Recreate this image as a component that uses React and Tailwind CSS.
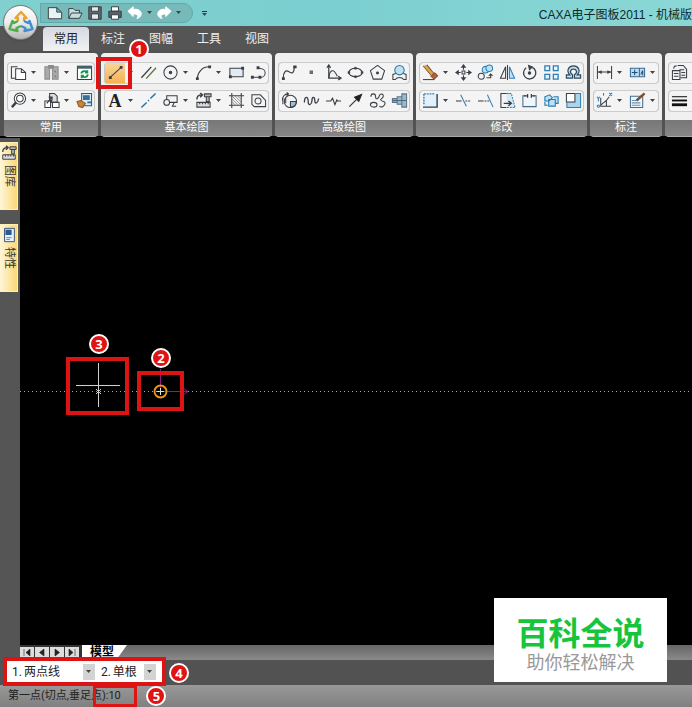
import React, { useState } from "react";

const ink = "#3a3f45";
const blue = "#2f7fb5";
const pale = "#bfe0f2";

const icons = {
  copy: (
    <>
      <path d="M8 3H1.500v12H6" />
      <path d="M6 5h6l4.500 4v7.500H6zM12 5v4h4.500" fill="#fff" />
    </>
  ),
  paste: (
    <g stroke="#8c8c8c">
      <path d="M2 3h5v13H2zM10 3h6v13h-6z" fill="#aaa" />
      <path d="M6 1.500h5v3H6z" fill="#888" />
      <path d="M8.500 6v11" stroke="#eee" />
      <path d="M12 7l2 2M12 12l2 2" stroke="#777" />
    </g>
  ),
  refresh: (
    <>
      <path d="M1.500 2.500h15v14h-15z" fill="#fff" />
      <path d="M1.500 3.500h15" strokeWidth="3" stroke="#44606b" />
      <path d="M5.500 10a3.500 3 0 0 1 6-1.500M12.500 11a3.500 3 0 0 1-6 2M12 6.500v2.500H9.500M6 15v-2.500h2.500" stroke="#159a51" strokeWidth="2" />
    </>
  ),
  zoom: (
    <>
      <circle cx="10.500" cy="7" r="6" fill="#fff" />
      <circle cx="10.500" cy="7" r="3.500" />
      <path d="M6.500 11 2 16" strokeWidth="2.500" />
    </>
  ),
  block: (
    <>
      <path d="M7 1.500h5l3 3V11H9V9H7z" fill="#ddd" />
      <path d="M2 9.500h6v7H2zM10 11h7v5.500h-7z" fill="#fff" />
      <path d="M4 12l5-6M6 5.500h3.500V9" strokeWidth="1.400" />
    </>
  ),
  brush: (
    <>
      <path d="M6 1.500h10.500v13H6z" fill="#d8ecf8" stroke="#35566e" />
      <path d="M8 4h6v4H8z" fill="#396f9c" stroke="#396f9c" />
      <path d="M12 11h4" stroke="#396f9c" strokeWidth="2" />
      <path d="M1 10l4-1 5 3-3 4.500-4-1z" fill="#c78336" stroke="#925a20" />
    </>
  ),
  line: (
    <>
      <path d="M3 14.500 15 3.500" />
      <path d="M2 13h3v3H2zM13.500 2h3v3h-3z" fill={ink} stroke="none" />
    </>
  ),
  parallel: (
    <>
      <path d="M1.500 14.500 12 3" strokeWidth="1.400" />
      <path d="M6.500 15.500 17 4" stroke="#597341" strokeWidth="1.400" />
    </>
  ),
  circle: (
    <>
      <circle cx="9" cy="9" r="7" />
      <circle cx="9" cy="9" r="1.300" fill={ink} />
    </>
  ),
  arc: (
    <>
      <path d="M2.500 15C3 8 8 3 15 3" />
      <path d="M1 14h3v3H1zM14 1.500h3v3h-3z" fill={ink} stroke="none" />
    </>
  ),
  rect: (
    <>
      <path d="M2 4.500h14v9H2z" fill="#e3ebf2" />
      <path d="M1 12h3v3H1zM14 3h3v3h-3z" fill={ink} stroke="none" />
    </>
  ),
  poly: (
    <>
      <path d="M2 14h9a4.500 4.500 0 0 0 1-9L8 4" />
      <path d="M1 12.500h3v3H1zM9 12.500h3v3H9zM7 2.500h3v3H7z" fill={ink} stroke="none" />
    </>
  ),
  center: <path d="M1.500 16.500 7 11M8.500 9.500l1-1M11 7l5.500-5.500" stroke="#28719f" strokeWidth="1.500" />,
  outline: (
    <>
      <path d="M5 4h11v7H5z" />
      <circle cx="5" cy="11" r="3" fill="#eef4f8" />
      <path d="M13 11l-2 4h4" />
    </>
  ),
  library: (
    <>
      <path d="M2 11h14v5H2zM5 11v2M8 11v2M11 11v2M14 11v2" fill="#ddd" />
      <path d="M2 8c0-4 2-5 5-5M5.500 1 8 3 5.500 5.500" strokeWidth="1.500" />
      <path d="M10 2h7v3h-7zM12 5h3v5h-3z" fill="#bbb" />
    </>
  ),
  hatch: (
    <>
      <path d="M4 1v16M14 1v16M1 4h16M1 14h16" />
      <path d="M4 7l7 7M4 4l10 10M7 4l7 7M10 4l4 4M4 10l4 4" stroke="#777" strokeWidth=".8" />
    </>
  ),
  region: (
    <>
      <path d="M2 3h9l5.500 6v6.500H4.500L2 13z" />
      <circle cx="8.500" cy="9.500" r="3.200" />
    </>
  ),
  spline: (
    <>
      <path d="M2.500 15C2 9 5 6 8 8s6 3 6-5" strokeWidth="1.300" />
      <path d="M1 14h3v3H1zM13 1.500h3.500v3H13z" fill={ink} stroke="none" />
    </>
  ),
  point: <path d="M7.500 7.500h2.500v2.500H7.500z" fill="#777" stroke="#666" />,
  formula: (
    <>
      <path d="M4 2v13h12M2 4l2-3 2 3M14 13l3 2-3 2" strokeWidth="1.300" />
      <path d="M4 15C5 6 9 4 13 13" />
    </>
  ),
  ellipse: (
    <>
      <ellipse cx="9" cy="9" rx="7" ry="4.500" />
      <path d="M8 3.500h2v2H8zM1 8h2v2H1zM15 8h2v2h-2zM8 12.500h2v2H8z" fill={ink} strokeWidth=".5" />
    </>
  ),
  polygon: (
    <>
      <path d="M9 1.500 16.500 7 13.500 16h-9L1.500 7z" />
      <circle cx="9" cy="9.500" r="1" fill={ink} />
    </>
  ),
  local: (
    <>
      <circle cx="9" cy="6.500" r="5" fill={pale} stroke="#35758f" />
      <path d="M5 10 2 11v5.500h2.500c2-3 7-3 9 0H16V11l-3-1" />
    </>
  ),
  gear: (
    <>
      <circle cx="10" cy="10" r="6.500" />
      <path d="M10 10h6c0 4-2 6-6 6z" fill="#9dbfd9" />
      <path d="M1.500 9c0-4 2-7 6-7M6 .500 8 2 6 4M2 5v8M5 6v6" />
    </>
  ),
  wave: <path d="M1.500 11c0-7 4-7 4-1s4 3 4-1 3-5 3 0 4 2 4-2" strokeWidth="1.400" />,
  breakline: <path d="M1 9.500h5l2-3 2.500 7 2-5 1 1H17" strokeWidth="1.200" />,
  arrow: (
    <>
      <path d="M2.500 15.500 11 7" strokeWidth="1.400" />
      <path d="M15.500 2.500 12.500 10 8 5.500z" fill="#222" stroke="#222" />
    </>
  ),
  contour: (
    <>
      <path d="M2 5c0-4 5-4 5 0s3 2 4-1 5-2 4 1-4 2-2 4 4 0 4 3-4 5-6 3" />
      <ellipse cx="5" cy="13.500" rx="3.500" ry="2.500" />
    </>
  ),
  shaft: (
    <>
      <path d="M1.500 7h5v4h-5zM6.500 5h5v8h-5zM11.500 2h5v14h-5z" fill="#9db9cc" stroke="#5b7487" />
      <path d="M1 9h15" stroke="#496980" />
    </>
  ),
  erase: (
    <>
      <path d="M1.500 2 10 12M5 1l8 10" stroke="#6f4a21" strokeWidth="1.500" />
      <path d="M3 1.500 12 12" stroke="#dca14d" strokeWidth="3" />
      <path d="M9.500 13l4-3.500 3 3-3.500 3.500z" fill="#b9653c" stroke="#8c4a29" />
      <path d="M1 16.500h12" />
    </>
  ),
  move: (
    <>
      <path d="M9 1v5M9 12v5M1 9h5M12 9h5" />
      <path d="M9 0l3 4H6zM9 18l-3-4h6zM0 9l4-3v6zM18 9l-4 3V6z" fill={ink} stroke="none" />
      <path d="M7.500 7.500h3v3h-3z" />
    </>
  ),
  duplicate: (
    <>
      <circle cx="9" cy="6" r="3.500" fill={pale} stroke={blue} />
      <circle cx="13" cy="4.500" r="3.500" fill={pale} stroke={blue} />
      <circle cx="4.500" cy="13" r="3.200" />
      <path d="M10 14.500h4.500V11M12.500 12.500l2-2 2 2" />
    </>
  ),
  mirror: (
    <>
      <path d="M7 3v12H1.500z" />
      <path d="M11 3v12h5.500z" fill={pale} stroke={blue} />
      <path d="M9 1v16" />
    </>
  ),
  rotate: (
    <>
      <path d="M5.500 4A6.500 6.500 0 1 0 12 3.500" strokeWidth="1.400" />
      <path d="M8 1.500l4 1.500-3 3z" fill={ink} />
      <circle cx="9" cy="9.500" r="1.300" fill={ink} />
    </>
  ),
  array: (
    <g stroke={blue} strokeWidth="1.400" fill="#eaf5fb">
      <path d="M2 2h5v5H2zM11 2h5v5h-5zM2 11h5v5H2zM11 11h5v5h-5z" />
    </g>
  ),
  offset: (
    <>
      <path d="M1.500 15v-3.500H5C1 7 4 2 9 2s8 5 4 9.500h3.500V15H10v-3.500c4-3 2-6-1-6s-5 3-1 6V15z" fill={pale} stroke="#31495d" strokeWidth="1.300" />
    </>
  ),
  scaleRect: (
    <>
      <path d="M2.500 2.500h13v13h-13z" fill="#e2f0f9" stroke="none" />
      <path d="M2 2h12M2 2v12" strokeDasharray="2 1" strokeWidth="1.500" stroke={blue} />
      <path d="M1 16h15V2" stroke="#2d4052" strokeWidth="1.500" />
    </>
  ),
  trim: (
    <>
      <path d="M1 9.500h6" />
      <path d="M11 9.500h6" strokeDasharray="2 1" />
      <path d="M6 3l6 12" stroke={blue} />
    </>
  ),
  extend: (
    <>
      <path d="M1 9.500h6" />
      <path d="M8 9.500h5" strokeDasharray="2 1" />
      <path d="M11 3l6 13" stroke={blue} />
    </>
  ),
  stretch: (
    <>
      <path d="M12 1.500H2v15h6" />
      <path d="M8 1.500h5l4 15H8" fill="#d5eaf7" stroke={blue} strokeDasharray="2 1" />
      <path d="M5 12h7M10 9.500l3 2.500-3 2.500" strokeWidth="1.500" />
    </>
  ),
  split: (
    <>
      <path d="M5 4H2v11.500h14V4h-3" fill="#eef6fb" stroke="#4b6b85" />
      <path d="M3 4h4M11 4h4M7 2v4M11 2v4" strokeWidth="1.300" />
    </>
  ),
  explode: (
    <g stroke={blue} fill={pale} strokeWidth="1.200">
      <path d="M2 5l5-2 3 3-4 4-4-1zM6 8h7v7H6zM11 5h5v7h-3M2 10v4h3" />
    </g>
  ),
  resize: (
    <>
      <path d="M11 1.500h5.500v15H2V11" fill="#a9d4ec" stroke={blue} />
      <path d="M1.500 1.500h9v9h-9z" fill="#fff" />
    </>
  ),
  dimension: (
    <>
      <path d="M1.500 2v14M16.500 2v14M2 8.500h14" />
      <path d="M2 8.500l4-2v4zM16 8.500l-4-2v4z" fill={ink} stroke="none" />
    </>
  ),
  tolerance: (
    <>
      <path d="M1.500 4.500h15v9h-15zM11 4.500v9" fill="#bcdaf0" stroke="#386b96" />
      <path d="M3 9h6M6 6v6M12.500 11l2-4v5" stroke="#234e75" />
    </>
  ),
  coordinate: (
    <>
      <path d="M5 6v9h11M5 14 11 9l3-4M11 9v6" />
      <path d="M1 5l1.500 2L4 5M2.500 7v3M14 1l3 3M17 1l-3 3M8 1v3" stroke={blue} />
      <circle cx="2.500" cy="15" r="1.200" stroke={blue} />
    </>
  ),
  edit: (
    <>
      <path d="M1.500 4.500h13v12h-13z" fill="#eef6fb" stroke="#446f91" />
      <path d="M3 9h7M3 11.500h9M3 14h9" stroke="#6d91ac" />
      <path d="M16.500 1.500 8 9" stroke="#79512d" strokeWidth="2.500" />
    </>
  ),
  sheet: (
    <>
      <path d="M7 1.500h6l3.500 4v9H10" fill="#eee" />
      <path d="M1.500 7h8v9.500h-8zM3 10h5M3 13h5M3 5c0-3 1-3 3-3M9 6h5M11 9h4M11 12h4" />
    </>
  ),
  width: (
    <g stroke="#111">
      <path d="M1 5h16" />
      <path d="M1 9h16" strokeWidth="2" />
      <path d="M1 13.500h16" strokeWidth="3" />
    </g>
  ),
  file: <path d="M1.500 3H11l5.500 5v7.500h-15zM11 3v5h5" fill="#e5f5f5" />,
  open: <path d="M2 15V4h5l2 2h5v3M2 15 5 9h12l-3 6z" fill="#c3dfdf" />,
  save: (
    <>
      <path d="M2 2h14v14H2z" fill="#5c6870" />
      <path d="M5 2h8v5H5zM5 10h8v6H5z" fill="#e4ecee" />
    </>
  ),
  print: (
    <>
      <path d="M5 2h8v5H5z" fill="#fff" />
      <path d="M2 7h14v7H2z" fill="#596269" />
      <path d="M5 11h8v5H5z" fill="#fff" />
    </>
  ),
  undo: <path d="M1 7 7 2v3c6-1 9 2 9 5s-3 5-5 5c2-2 2-5-4-5v3z" fill="#fff" stroke="#fff" />,
  redo: <path d="M17 7 11 2v3C5 4 2 7 2 10s3 5 5 5c-2-2-2-5 4-5v3z" fill="#fff" stroke="#fff" />,
  panel: (
    <>
      <path d="M4 1.500h11v15H4z" fill="#eaf2fa" stroke="#395475" />
      <path d="M5 3h7v6H5z" fill="#2a5b99" stroke="none" />
      <path d="M6 12h6M6 14h4" stroke="#6688a8" />
    </>
  ),
};

function Icon({ name, className }) {
  return (
    <svg viewBox="0 0 18 18" className={className} fill="none" stroke={ink} strokeWidth="1.100" aria-hidden="true">
      {icons[name]}
    </svg>
  );
}

function Caret() {
  return (
    <svg viewBox="0 0 5 3" className="h-[3px] w-[5px]" aria-hidden="true">
      <path d="M0 0h5L2.500 3z" fill="#444" />
    </svg>
  );
}

// A trailing "+" marks a tool that has a drop-down menu.
const groups = [
  { title: "常用", rows: [["copy+", "paste+", "refresh"], ["zoom+", "block+", "brush"]] },
  {
    title: "基本绘图",
    rows: [
      ["line+", "parallel", "circle+", "arc+", "rect", "poly"],
      ["text+", "center", "outline+", "library+", "hatch", "region"],
    ],
  },
  {
    title: "高级绘图",
    rows: [
      ["spline", "point", "formula", "ellipse", "polygon", "local"],
      ["gear", "wave", "breakline", "arrow", "contour", "shaft"],
    ],
  },
  {
    title: "修改",
    rows: [
      ["erase+", "move", "duplicate", "mirror", "rotate", "array", "offset"],
      ["scaleRect+", "trim", "extend", "stretch", "split", "explode", "resize"],
    ],
  },
  { title: "标注", rows: [["dimension+", "tolerance+"], ["coordinate+", "edit+"]] },
  { title: "", rows: [["sheet+"], ["width+"]] },
];

function Tool({ id }) {
  const name = id.replace("+", "");
  const active = name === "line";
  return (
    <div className="flex shrink-0 items-center">
      <button
        aria-label={name}
        className={
          active
            ? "relative flex h-5 w-5 items-center justify-center bg-gradient-to-b from-[#f9d49a] to-[#f6b24e]"
            : "flex h-5 w-5 items-center justify-center"
        }
      >
        {name === "text" ? (
          <span className="font-['Liberation_Serif',serif] text-[18px] leading-5 font-bold text-[#222]">A</span>
        ) : (
          <Icon name={name} className="size-[17px]" />
        )}
        {active && (
          <span className="pointer-events-none absolute -top-[6px] -left-[9px] z-10 h-[32px] w-[36px] border-4 border-[#dc1414]">
            <span className="absolute -top-[22px] left-[29px]">
              <Badge>1</Badge>
            </span>
          </span>
        )}
      </button>
      {id.endsWith("+") && (
        <button aria-label={name + " menu"} className="flex h-5 w-[11px] items-center justify-center">
          <Caret />
        </button>
      )}
    </div>
  );
}

function Badge({ children }) {
  return (
    <span className="flex size-5 items-center justify-center rounded-full border-2 border-white bg-[#e01212] font-['Noto_Sans',sans-serif] text-[13px] leading-4 font-bold text-white">
      {children}
    </span>
  );
}

function TitleBar() {
  return (
    <header className="relative flex h-[26px] items-center bg-gradient-to-r from-[#7fd0cf] via-[#7ccfd0] to-[#8ad8d6]">
      <button
        aria-label="menu"
        className="absolute top-[5px] left-[3px] z-10 flex size-[35px] items-center justify-center rounded-full border border-[#777] bg-gradient-to-b from-white via-[#ececec] to-[#b5b5b5] shadow"
      >
        <svg viewBox="0 0 28 28" className="size-7" fill="none" strokeWidth="2.400" strokeLinejoin="round" aria-hidden="true">
          <path d="M11 12V9H8.500L14 3l5.500 6H17v3" stroke="#f0a32c" />
          <path d="M17 12l4 2 1.500-2 3 8-8 2 1-3-4.500-2" stroke="#3e8fd0" />
          <path d="M11 12l-4 2-1.500-2-3 8 8 2-1-3 4.500-2" stroke="#4fae48" />
        </svg>
      </button>
      <div className="mb-px ml-10 flex h-5 w-[153px] items-center gap-1 rounded-r-full border border-[#62a9aa] bg-[#78b9ba] pl-[6px]">
        {["file", "open", "save", "print"].map((n) => (
          <button key={n} aria-label={n}>
            <Icon name={n} className="size-4" />
          </button>
        ))}
        <button aria-label="undo"><Icon name="undo" className="size-4" /></button>
        <Caret />
        <button aria-label="redo"><Icon name="redo" className="size-4" /></button>
        <Caret />
      </div>
      <button aria-label="customize" className="ml-[9px] flex flex-col items-center gap-px">
        <span className="h-px w-[5px] bg-[#333]" />
        <Caret />
      </button>
      <h1 className="ml-auto pt-1 font-['Liberation_Sans','Noto_Sans_CJK_SC',sans-serif] text-[12px] leading-5 whitespace-nowrap text-[#10282a]">
        CAXA电子图板2011 - 机械版
      </h1>
    </header>
  );
}

function Ribbon() {
  return (
    <section className="flex h-[87px] gap-[3px] border-b-2 border-black bg-[#525252] pt-[2px] pl-1">
      {groups.map((g, i) => (
        <div key={i} className="flex h-[84px] shrink-0 flex-col rounded-sm border-b border-[#aaa] bg-[#f0f0f0]">
          <div className="flex flex-1 flex-col justify-center gap-2 px-[3px]">
            {g.rows.map((r, j) => (
              <div key={j} className="flex gap-[2px] rounded-sm border-x border-[#c6c6c6] bg-[#f4f4f4] shadow-[0_1px_0_#ccc,0_-1px_0_#ccc]">
                {r.map((t) => (
                  <Tool key={t} id={t} />
                ))}
              </div>
            ))}
          </div>
          <div className="h-4 bg-gradient-to-b from-[#777] to-[#868686] text-center text-[11px] leading-4 text-white">
            {g.title}
          </div>
        </div>
      ))}
    </section>
  );
}

function SideTab({ icon, children }) {
  return (
    <button className="flex h-[68px] w-[18px] flex-col items-center gap-1 border-y border-r border-[#fff0b8] bg-gradient-to-r from-[#fff6d8] to-[#fbd872] pt-[2px]">
      <Icon name={icon} className="size-4" />
      <span className="text-[11px] leading-4 text-[#333] [text-orientation:sideways] [writing-mode:vertical-rl]">{children}</span>
    </button>
  );
}

function Drawing() {
  return (
    <main className="relative min-w-0 flex-1 overflow-hidden bg-black">
      <div className="absolute top-[253px] h-px w-full bg-[repeating-linear-gradient(90deg,#aaa_0_1px,transparent_1px_4px)]" />
      <svg className="absolute top-[219px] left-[46px] h-[60px] w-[130px]" viewBox="0 0 130 60" fill="none" aria-hidden="true">
        <path d="M32.500 6v44M10 28.500h44" stroke="#d0d0d0" />
        <path d="M30 32l5 5M35 32l-5 5" stroke="#ccc" />
        <path d="M94.500 34V12M94.500 34.500H122M117 31l5 3.500-5 3.500" stroke="#92148f" />
        <circle cx="94.500" cy="34.500" r="6" stroke="#e79b1d" strokeWidth="1.800" />
        <path d="M91 34.500h7M94.500 31v7" stroke="#ddd" />
      </svg>
      <div className="absolute top-[219px] left-[46px] h-[58px] w-[63px] border-4 border-[#dc1414]" />
      <div className="absolute top-[233px] left-[117px] h-[40px] w-[47px] border-4 border-[#dc1414]" />
      <div className="absolute top-[196px] left-[69px]"><Badge>3</Badge></div>
      <div className="absolute top-[210px] left-[131px]"><Badge>2</Badge></div>
    </main>
  );
}

function Choice({ id, label, value, className }) {
  return (
    <div className="flex h-5 items-center gap-[2px]">
      <label htmlFor={id} className="text-[12px] leading-4">{label}</label>
      <div className={className}>
        <select id={id} defaultValue={value} className="block h-5 w-full appearance-none bg-transparent text-[12px] leading-5 outline-none">
          <option>{value}</option>
        </select>
        <span className="pointer-events-none absolute top-[2px] right-0 flex h-4 w-3 items-center justify-center bg-[#d3d3d3]">
          <Caret />
        </span>
      </div>
    </div>
  );
}

export default function App() {
  const [value, setValue] = useState("10");
  return (
    <div className="relative flex min-h-screen flex-col overflow-hidden bg-[#525252] font-[Roboto,'Noto_Sans_CJK_SC',sans-serif] text-[#222]">
      <TitleBar />
      <nav className="flex h-[25px] items-end bg-[#555] pl-[43px] text-[12px] leading-5">
        <button className="h-6 w-[46px] rounded-t bg-gradient-to-b from-[#d5d9e0] to-[#f2f2f2] text-[#222]">常用</button>
        {["标注", "图幅", "工具", "视图"].map((t) => (
          <button key={t} className="h-6 w-12 text-[#eee]">{t}</button>
        ))}
      </nav>
      <Ribbon />
      <div className="flex min-h-[300px] flex-1">
        <aside className="flex w-5 shrink-0 flex-col gap-[14px] bg-[#555] pt-1">
          <SideTab icon="library">图库</SideTab>
          <SideTab icon="panel">特性</SideTab>
        </aside>
        <Drawing />
      </div>
      <div className="flex h-[15px] items-center bg-gradient-to-b from-[#666] to-[#8a8a8a]">
        <div className="w-5 self-stretch bg-[#555]" />
        <div className="flex h-full items-center gap-px bg-[#333] pr-[3px]">
          {["M3 2v7M9 2v7L5 5.500z", "M8 2v7L3.500 5.500z", "M4 2v7l4.500-3.500z", "M9 2v7M3 2v7l4-3.500z"].map((d, i) => (
            <button key={i} aria-label={["first", "previous", "next", "last"][i]} className="h-[11px] w-[14px] bg-[#ddd]">
              <svg viewBox="0 0 12 11" className="mx-auto h-[11px] w-3" fill="#222" stroke="#222" strokeWidth=".6">
                <path d={d} />
              </svg>
            </button>
          ))}
        </div>
        <button className="h-full w-[45px] bg-white pr-[5px] text-[12px] leading-[15px] font-bold text-black [clip-path:polygon(0_0,100%_0,76%_100%,0_100%)]">
          模型
        </button>
      </div>
      <div className="relative flex h-[25px] items-center">
        <div className="absolute -top-[3px] left-[3px] flex h-[29px] w-[163px] items-center gap-[6px] border-4 border-[#dc1414] bg-white pl-[5px]">
          <Choice id="line-kind" label="1." value="两点线" className="relative w-[71px]" />
          <Choice id="line-mode" label="2." value="单根" className="relative w-[43px]" />
        </div>
        <div className="ml-[169px]"><Badge>4</Badge></div>
      </div>
      <footer className="flex h-[22px] items-center bg-gradient-to-b from-[#999] to-[#808080] pl-2 text-[11px] leading-5">
        <label htmlFor="point" className="whitespace-nowrap">第一点(切点,垂足点):</label>
        <div className="relative">
          <input
            id="point"
            value={value}
            onChange={(e) => setValue(e.target.value)}
            className="block h-5 w-[38px] bg-transparent outline-none"
          />
          <span className="pointer-events-none absolute -top-[1px] right-[9px] h-[22px] w-[44px] border-[3px] border-[#dc1414]" />
        </div>
        <Badge>5</Badge>
      </footer>
      <div className="absolute right-[25px] bottom-[25px] flex h-[84px] w-[173px] flex-col items-center justify-center bg-white pt-[6px] font-['Noto_Sans_CJK_SC',sans-serif]">
        <strong className="text-[32px] leading-9 font-bold text-[#16c53b]">百科全说</strong>
        <span className="text-[18px] leading-6 text-[#999]">助你轻松解决</span>
      </div>
    </div>
  );
}
